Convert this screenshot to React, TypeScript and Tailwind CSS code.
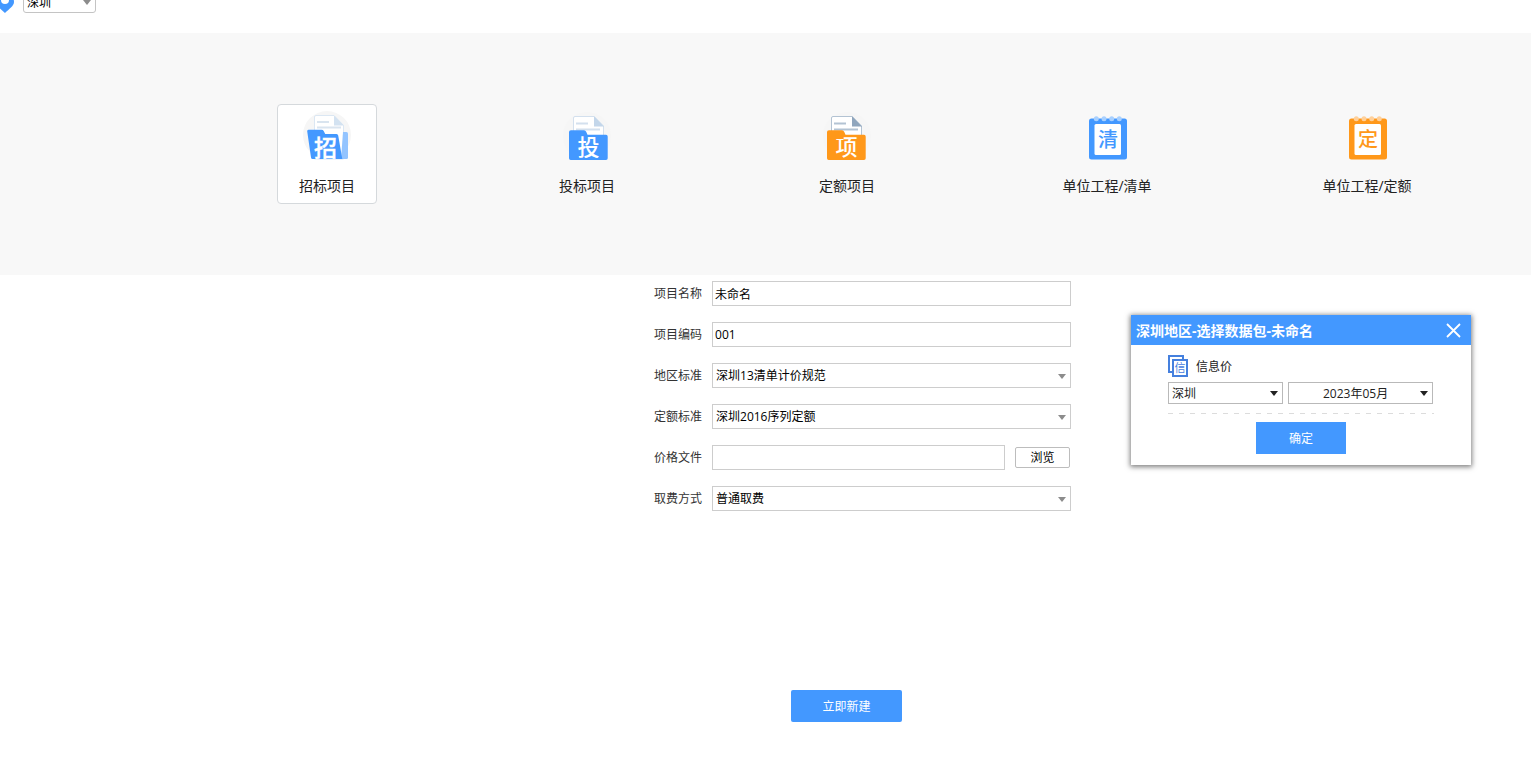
import { useState } from "react";
import type { ReactNode } from "react";

type IconProps = { glyph: string };

const glyphClass = "font-['Noto_Sans_CJK_SC',sans-serif] font-medium";

function TenderIcon({ glyph }: IconProps) {
  return (
    <svg width="48" height="50" viewBox="0 0 48 50" aria-hidden="true">
      <path d="M7 41a24 24 0 1 1 34 0v7H9z" fill="#f6f6f6" />
      <path d="M11.5 6Q11.5 4.500 13 4.500H31L40.500 14.500V48H11.5z" fill="#fff" stroke="#dbe7f3" />
      <path d="M31 4.500V14.500H41z" fill="#d3e2f1" />
      <path d="M14 11h12M14 16.500h24" stroke="#d9e4ef" strokeWidth="2" />
      <path d="M40 21h3.500q1.500 0 1.500 1.500V46.500q0 1.500-1.500 1.500H38z" fill="#93c4ff" />
      <path
        d="M5.500 18.700H18.500Q20 18.700 20.700 20L22.200 23H33.500q1.500 0 1.700 1.500L39.300 48H9.700Q8.200 48 8 46.500L4.200 20.200Q4 18.700 5.500 18.700z"
        fill="#4398ff"
      />
      <text x="22.500" y="44.500" textAnchor="middle" fontSize="23" fill="#fff" className={glyphClass} stroke="#fff" strokeWidth="0.400">
        {glyph}
      </text>
    </svg>
  );
}

function FolderIcon({
  glyph,
  fill,
  line,
  fold,
  left,
}: IconProps & { fill: string; line: string; fold: string; left: number }) {
  return (
    <svg width="48" height="50" viewBox="0 0 48 50" aria-hidden="true">
      <circle cx="24" cy="25" r="24" fill="#f6f6f6" />
      <g transform={`translate(${left} 0)`}>
        <path d="M4.500 30V7Q4.500 5.500 6 5.500H25L34.500 15V30z" fill="#fff" stroke={line} />
        <path d="M25 5V15.500H35z" fill={fold} />
        <path d="M7 12.500H19M7 18.500H31" stroke={line} strokeWidth="2" />
        <path
          d="M2 19.300H15Q16.500 19.300 17.200 20.800L18.500 23.700H37Q38.700 23.700 38.700 25.400V47.300Q38.700 49 37 49H1.700Q0 49 0 47.300V21Q0 19.300 2 19.300z"
          fill={fill}
        />
        <text x="19.500" y="44" textAnchor="middle" fontSize="22" fill="#fff" className={glyphClass}>
          {glyph}
        </text>
      </g>
    </svg>
  );
}

function NotebookIcon({ glyph, fill, ring }: IconProps & { fill: string; ring: string }) {
  return (
    <svg width="48" height="50" viewBox="0 0 48 50" aria-hidden="true">
      <rect x="6" y="7.500" width="38" height="41" rx="2.500" fill={fill} />
      <rect x="11.500" y="13" width="26.500" height="31" rx="1.500" fill="#fff" />
      {[13.3, 21, 28.7, 36.3].map((x) => (
        <circle key={x} cx={x} cy="7.800" r="2.500" fill={ring} />
      ))}
      <text x="25" y="36" textAnchor="middle" fontSize="20" fill={fill} className={glyphClass}>
        {glyph}
      </text>
    </svg>
  );
}

const projectTypes: { label: string; icon: ReactNode }[] = [
  { label: "招标项目", icon: <TenderIcon glyph="招" /> },
  {
    label: "投标项目",
    icon: <FolderIcon glyph="投" fill="#4398ff" line="#d3e0ee" fold="#c3d6ea" left={6} />,
  },
  {
    label: "定额项目",
    icon: <FolderIcon glyph="项" fill="#ff981a" line="#b3c3d3" fold="#90a6bd" left={4} />,
  },
  { label: "单位工程/清单", icon: <NotebookIcon glyph="清" fill="#4398ff" ring="#a8d0ff" /> },
  { label: "单位工程/定额", icon: <NotebookIcon glyph="定" fill="#ff981a" ring="#ffd09a" /> },
];

function Arrow({ className }: { className: string }) {
  return (
    <svg
      width="8"
      height="5"
      viewBox="0 0 8 5"
      aria-hidden="true"
      className={`pointer-events-none col-start-1 row-start-1 self-center justify-self-end ${className}`}
    >
      <path d="M0 0H8L4 5z" fill="currentColor" />
    </svg>
  );
}

function Field({ id, label, children }: { id: string; label: string; children: ReactNode }) {
  return (
    <div className="flex h-[25px] items-center gap-[10px]">
      <label htmlFor={id} className="shrink-0 text-[#333]">
        {label}
      </label>
      {children}
    </div>
  );
}

const boxClass = "h-[25px] min-w-0 border border-[#cdcdcd] bg-white text-black outline-none";

function SelectBox({ id, value }: { id: string; value: string }) {
  return (
    <div className="grid flex-1">
      <select id={id} className={`${boxClass} col-start-1 row-start-1 appearance-none pl-[3px]`}>
        <option>{value}</option>
      </select>
      <Arrow className="mt-[2px] mr-[5px] text-[#8c8c8c]" />
    </div>
  );
}

function DataPackDialog({ onClose }: { onClose: () => void }) {
  const selectClass =
    "col-start-1 row-start-1 h-[22px] appearance-none border border-[#b9b9b9] bg-white pt-[2px] text-[#222] outline-none";
  return (
    <section
      role="dialog"
      aria-labelledby="pack-title"
      className="absolute top-[315px] right-[60px] w-[340px] bg-white pb-[11px] shadow-[0_1px_5px_1px_rgba(0,0,0,0.5)]"
    >
      <header className="flex h-[30px] items-center justify-between bg-[#4398ff] pr-[10px] pl-[5px] text-white">
        <h2 id="pack-title" className="pt-[2px] text-sm font-bold">
          深圳地区-选择数据包-未命名
        </h2>
        <button type="button" aria-label="关闭" onClick={onClose}>
          <svg width="15" height="15" viewBox="0 0 15 15" aria-hidden="true">
            <path d="M1 1L14 14M14 1L1 14" stroke="#fff" strokeWidth="1.800" />
          </svg>
        </button>
      </header>
      <div className="flex flex-col px-[37px] pt-[10px]">
        <div className="flex items-center gap-2 text-[#222]">
          <svg width="20" height="22" viewBox="0 0 20 22" aria-hidden="true">
            <path d="M5 17H1V1H15V5" fill="none" stroke="#4580de" strokeWidth="2" />
            <rect x="5" y="5" width="14" height="16" fill="#fff" stroke="#4580de" strokeWidth="2" />
            <text
              x="12"
              y="17"
              textAnchor="middle"
              fontSize="11"
              fill="#4580de"
              className="font-['Noto_Sans_CJK_SC',sans-serif]"
            >
              信
            </text>
          </svg>
          <span className="pt-[2px]">信息价</span>
        </div>
        <div className="mt-[5px] flex gap-[5px]">
          <div className="grid w-[115px]">
            <select aria-label="地区" className={`${selectClass} pl-[3px]`}>
              <option>深圳</option>
            </select>
            <Arrow className="mr-[5px] text-[#222]" />
          </div>
          <div className="grid w-[145px]">
            <select aria-label="月份" className={`${selectClass} pl-[34px]`}>
              <option>2023年05月</option>
            </select>
            <Arrow className="mr-[5px] text-[#222]" />
          </div>
        </div>
        <div className="mt-[9px] h-px bg-[repeating-linear-gradient(90deg,#dcdcdc_0_5px,transparent_5px_11px)]" />
        <button type="button" className="mt-2 h-8 w-[90px] self-center bg-[#4398ff] pt-[2px] text-white">
          确定
        </button>
      </div>
    </section>
  );
}

export default function App() {
  const [active, setActive] = useState(0);
  const [open, setOpen] = useState(true);

  return (
    <div className="relative min-h-screen bg-white font-['Open_Sans','Noto_Sans_CJK_SC',sans-serif] text-xs">
      <header className="mb-5 flex h-[13px] items-end gap-[9px] overflow-hidden">
        <svg width="14" height="22" viewBox="0 0 14 22" className="shrink-0" aria-hidden="true">
          <path d="M-4 11a9 9 0 0 1 18 0c0 4-5 7-9 11c-4-4-9-7-9-11z" fill="#4398ff" />
          <circle cx="5" cy="9" r="4" fill="#fff" />
        </svg>
        <div className="grid w-[73px]">
          <select
            aria-label="地区"
            className="col-start-1 row-start-1 h-[22px] appearance-none rounded-[3px] border border-[#c4c4c4] bg-white pt-[2px] pl-[3px] text-black outline-none"
          >
            <option>深圳</option>
          </select>
          <Arrow className="mr-[5px] text-[#8c8c8c]" />
        </div>
      </header>

      <nav className="flex justify-center gap-[160px] bg-[#f8f8f8] py-[71px] pl-[163px]">
        {projectTypes.map((type, index) => (
          <button
            key={type.label}
            type="button"
            aria-pressed={index === active}
            onClick={() => setActive(index)}
            className={`flex h-[100px] w-[100px] shrink-0 flex-col items-center gap-[15px] rounded border pt-[6px] text-sm whitespace-nowrap text-[#222] ${
              index === active ? "border-[#d5d9dc] bg-white" : "border-transparent"
            }`}
          >
            {type.icon}
            <span>{type.label}</span>
          </button>
        ))}
      </nav>

      <main className="flex flex-col items-center pt-[6px] pl-[162px]">
        <form className="ml-8 flex w-[417px] flex-col gap-4">
          <Field id="name" label="项目名称">
            <input id="name" defaultValue="未命名" className={`${boxClass} flex-1 px-[2px]`} />
          </Field>
          <Field id="code" label="项目编码">
            <input id="code" defaultValue="001" className={`${boxClass} flex-1 px-[2px]`} />
          </Field>
          <Field id="region" label="地区标准">
            <SelectBox id="region" value="深圳13清单计价规范" />
          </Field>
          <Field id="quota" label="定额标准">
            <SelectBox id="quota" value="深圳2016序列定额" />
          </Field>
          <Field id="price" label="价格文件">
            <input id="price" className={`${boxClass} flex-1 px-[2px]`} />
            <button
              type="button"
              className="mr-px h-[21px] w-[55px] rounded-[2px] border border-[#bdbdbd] bg-white text-black"
            >
              浏览
            </button>
          </Field>
          <Field id="fee" label="取费方式">
            <SelectBox id="fee" value="普通取费" />
          </Field>
        </form>
        <button
          type="button"
          className="mt-[179px] h-8 w-[111px] rounded-[2px] bg-[#4398ff] pt-[2px] text-white"
        >
          立即新建
        </button>
      </main>

      {open && <DataPackDialog onClose={() => setOpen(false)} />}
    </div>
  );
}
